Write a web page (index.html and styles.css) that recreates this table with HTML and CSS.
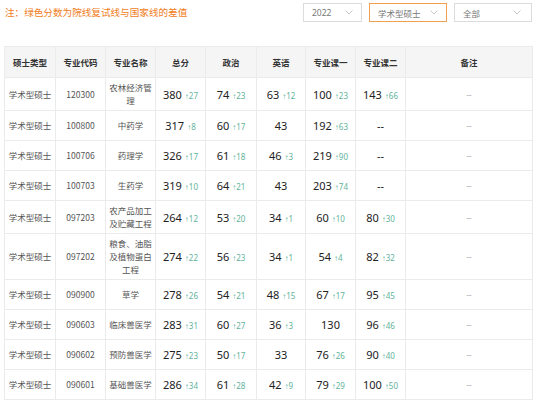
FILE: index.html
```html
<!DOCTYPE html>
<html lang="zh">
<head>
<meta charset="utf-8">
<link rel="stylesheet" href="styles.css">
</head>
<body>
<div class="page">
  <div class="topbar">
    <div class="notice">注：绿色分数为院线复试线与国家线的差值</div>
    <div class="filters">
      <div class="select s-year"><span>2022</span><svg class="chev" width="8" height="5" viewBox="0 0 8 5"><polyline points="0.5,0.5 4,4 7.5,0.5" fill="none" stroke="#c8c8c8" stroke-width="1"/></svg></div>
      <div class="select s-type active"><span>学术型硕士</span><svg class="chev" width="8" height="5" viewBox="0 0 8 5"><polyline points="0.5,0.5 4,4 7.5,0.5" fill="none" stroke="#c8c8c8" stroke-width="1"/></svg></div>
      <div class="select s-all"><span>全部</span><svg class="chev" width="8" height="5" viewBox="0 0 8 5"><polyline points="0.5,0.5 4,4 7.5,0.5" fill="none" stroke="#c8c8c8" stroke-width="1"/></svg></div>
    </div>
  </div>
  <table class="score">
    <colgroup>
      <col class="c51"><col class="c50"><col class="c50"><col class="c50"><col class="c51"><col class="c49"><col class="c50"><col class="c50"><col class="c127">
    </colgroup>
    <thead>
      <tr><th>硕士类型</th><th>专业代码</th><th>专业名称</th><th>总分</th><th>政治</th><th>英语</th><th>专业课一</th><th>专业课二</th><th>备注</th></tr>
    </thead>
    <tbody>
      <tr><td class="t">学术型硕士</td><td class="t">120300</td><td class="t name"><span>农林经济管理</span></td><td><b>380</b><i>↑27</i></td><td><b>74</b><i>↑23</i></td><td><b>63</b><i>↑12</i></td><td><b>100</b><i>↑23</i></td><td><b>143</b><i>↑66</i></td><td class="r">--</td></tr>
      <tr><td class="t">学术型硕士</td><td class="t">100800</td><td class="t name"><span>中药学</span></td><td><b>317</b><i>↑8</i></td><td><b>60</b><i>↑17</i></td><td><b>43</b></td><td><b>192</b><i>↑63</i></td><td><b>--</b></td><td class="r">--</td></tr>
      <tr><td class="t">学术型硕士</td><td class="t">100706</td><td class="t name"><span>药理学</span></td><td><b>326</b><i>↑17</i></td><td><b>61</b><i>↑18</i></td><td><b>46</b><i>↑3</i></td><td><b>219</b><i>↑90</i></td><td><b>--</b></td><td class="r">--</td></tr>
      <tr><td class="t">学术型硕士</td><td class="t">100703</td><td class="t name"><span>生药学</span></td><td><b>319</b><i>↑10</i></td><td><b>64</b><i>↑21</i></td><td><b>43</b></td><td><b>203</b><i>↑74</i></td><td><b>--</b></td><td class="r">--</td></tr>
      <tr><td class="t">学术型硕士</td><td class="t">097203</td><td class="t name"><span>农产品加工及贮藏工程</span></td><td><b>264</b><i>↑12</i></td><td><b>53</b><i>↑20</i></td><td><b>34</b><i>↑1</i></td><td><b>60</b><i>↑10</i></td><td><b>80</b><i>↑30</i></td><td class="r">--</td></tr>
      <tr><td class="t">学术型硕士</td><td class="t">097202</td><td class="t name"><span>粮食、油脂及植物蛋白工程</span></td><td><b>274</b><i>↑22</i></td><td><b>56</b><i>↑23</i></td><td><b>34</b><i>↑1</i></td><td><b>54</b><i>↑4</i></td><td><b>82</b><i>↑32</i></td><td class="r">--</td></tr>
      <tr><td class="t">学术型硕士</td><td class="t">090900</td><td class="t name"><span>草学</span></td><td><b>278</b><i>↑26</i></td><td><b>54</b><i>↑21</i></td><td><b>48</b><i>↑15</i></td><td><b>67</b><i>↑17</i></td><td><b>95</b><i>↑45</i></td><td class="r">--</td></tr>
      <tr><td class="t">学术型硕士</td><td class="t">090603</td><td class="t name"><span>临床兽医学</span></td><td><b>283</b><i>↑31</i></td><td><b>60</b><i>↑27</i></td><td><b>36</b><i>↑3</i></td><td><b>130</b></td><td><b>96</b><i>↑46</i></td><td class="r">--</td></tr>
      <tr><td class="t">学术型硕士</td><td class="t">090602</td><td class="t name"><span>预防兽医学</span></td><td><b>275</b><i>↑23</i></td><td><b>50</b><i>↑17</i></td><td><b>33</b></td><td><b>76</b><i>↑26</i></td><td><b>90</b><i>↑40</i></td><td class="r">--</td></tr>
      <tr><td class="t">学术型硕士</td><td class="t">090601</td><td class="t name"><span>基础兽医学</span></td><td><b>286</b><i>↑34</i></td><td><b>61</b><i>↑28</i></td><td><b>42</b><i>↑9</i></td><td><b>79</b><i>↑29</i></td><td><b>100</b><i>↑50</i></td><td class="r">--</td></tr>
    </tbody>
  </table>
</div>
</body>
</html>
```

FILE: styles.css
```css
* { box-sizing: border-box; }
html, body { margin: 0; padding: 0; background: #fff; }
body {
  font-family: "Noto Sans", "Noto Sans CJK SC", sans-serif;
  color: #333;
}
.page { width: 538px; padding: 0 6px 0 4px; }
.topbar {
  display: flex;
  justify-content: space-between;
  align-items: flex-start;
  height: 46px;
  padding-top: 3px;
}
.notice {
  font-family: "Noto Sans CJK SC", sans-serif;
  font-size: 9.6px;
  line-height: 19px;
  color: #f07d22;
  padding-left: 1px;
}
.filters { display: flex; gap: 7px; }
.select {
  height: 19px;
  border: 1px solid #dcdcdc;
  display: flex;
  align-items: center;
  justify-content: space-between;
  padding: 0 8px 0 8px;
  font-family: "Noto Sans", "Noto Sans CJK SC", sans-serif;
  font-size: 8.5px;
  color: #777;
  background: #fff;
}
.select.active { border-color: #f0a050; }
.s-year { width: 59px; }
.s-type { width: 78px; }
.s-all { width: 78px; padding-right: 10px; }
.chev { display: block; }
table.score {
  width: 528px;
  table-layout: fixed;
  border-collapse: collapse;
}
.c51 { width: 51px; }
.c50 { width: 50px; }
.c49 { width: 49px; }
.c127 { width: 127px; }
th, td {
  border: 1px solid #ebebeb;
  text-align: center;
  vertical-align: middle;
  padding: 3px 3px;
}
th {
  background: #f5f5f5;
  height: 31px;
  font-family: "Noto Sans CJK SC", sans-serif;
  font-size: 8.5px;
  font-weight: 700;
  color: #333;
}
tbody tr { height: 30px; }
td {
  white-space: nowrap;
  font-size: 11px;
  color: #222;
}
td.t {
  font-family: "Noto Sans CJK SC", sans-serif;
  font-size: 8.5px;
  color: #555;
  line-height: 13px;
}
td.name { white-space: normal; padding: 3px 2px; }
td.name span {
  display: block;
  max-width: 44px;
  margin: 0 auto;
  word-break: break-all;
}
td b {
  font-weight: 400;
  font-family: "Noto Sans", sans-serif;
  font-size: 11px;
  color: #222;
}
td i {
  font-style: normal;
  font-family: "Noto Sans", "Liberation Sans", sans-serif;
  font-size: 8px;
  color: #62b39b;
  margin-left: 3px;
}
td.r {
  font-size: 8px;
  color: #aaa;
}
```
